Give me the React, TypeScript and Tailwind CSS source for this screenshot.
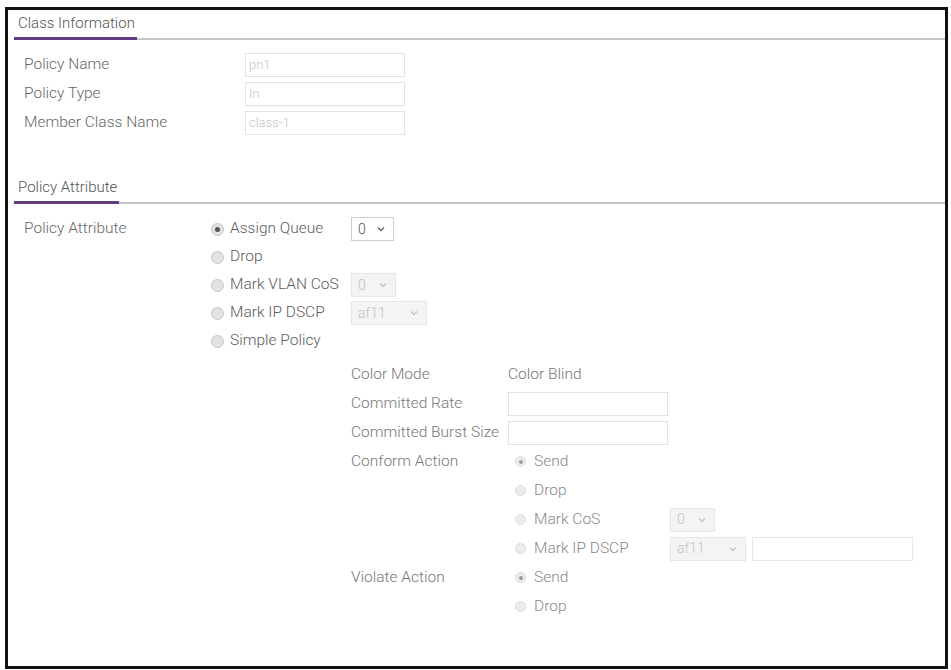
import React from 'react';

const Chevron: React.FC<{ muted?: boolean }> = ({ muted }) => (
  <svg width="8" height="6" viewBox="0 0 8 6" className="shrink-0">
    <path d="M1 1.5 L4 4.5 L7 1.5" fill="none" stroke={muted ? '#c4c4c4' : '#666'} strokeWidth="1.4" />
  </svg>
);

const Select: React.FC<{ value: string; width: string; disabled?: boolean }> = ({ value, width, disabled }) => (
  <div
    className={`flex h-[24px] items-center justify-between pl-[6px] pr-[8px] text-[14px] border ${width} ${
      disabled ? 'bg-[#f4f4f4] border-[#e6e6e6] text-[#c2c2c2]' : 'bg-white border-[#cfcfcf] text-[#555]'
    }`}
  >
    <span>{value}</span>
    <Chevron muted={disabled} />
  </div>
);

const TextBox: React.FC<{ value?: string; className?: string }> = ({ value, className = '' }) => (
  <div className={`flex h-[24px] w-[160px] items-center border border-[#e2e2e2] bg-white pl-[3px] text-[13px] text-[#c4c4c4] ${className}`}>
    {value}
  </div>
);

const Radio: React.FC<{ checked?: boolean; small?: boolean }> = ({ checked, small }) => (
  <span
    className={`flex shrink-0 items-center justify-center rounded-full border ${
      small ? 'h-[11px] w-[11px] border-[#dcdcdc] bg-[#ececec]' : 'h-[13px] w-[13px] border-[#c4c4c4] bg-[#e2e2e2]'
    }`}
  >
    {checked && <span className={`rounded-full ${small ? 'h-[4px] w-[4px] bg-[#9a9a9a]' : 'h-[5px] w-[5px] bg-[#555]'}`} />}
  </span>
);

const SectionHeader: React.FC<{ title: string }> = ({ title }) => (
  <div className="ml-[6px] flex h-[30px] items-end border-b-2 border-[#c6c6c6]">
    <div className="-mb-[2px] border-b-[3px] border-[#5f3d80] pb-[5px] pl-[4px] pr-[2px] text-[15px] leading-[18px] text-[#555]">
      {title}
    </div>
  </div>
);

const InfoRow: React.FC<{ label: string; value: string }> = ({ label, value }) => (
  <div className="flex h-[29px] items-center pl-[16px]">
    <div className="w-[221px] text-[#666]">{label}</div>
    <TextBox value={value} />
  </div>
);

const attributeOptions = [
  { label: 'Assign Queue', checked: true, select: <Select value="0" width="w-[43px]" /> },
  { label: 'Drop' },
  { label: 'Mark VLAN CoS', select: <Select value="0" width="w-[45px]" disabled /> },
  { label: 'Mark IP DSCP', select: <Select value="af11" width="w-[76px]" disabled /> },
  { label: 'Simple Policy' },
] as { label: string; checked?: boolean; select?: React.ReactNode }[];

// one line of the simple policy block: label column + value column
const PolicyRow: React.FC<{ label?: string; children?: React.ReactNode }> = ({ label, children }) => (
  <div className="flex h-[29px] items-center">
    <div className="w-[157px] whitespace-nowrap text-[#777]">{label}</div>
    <div className="flex items-center">{children}</div>
  </div>
);

const ActionOption: React.FC<{ label: string; checked?: boolean; extra?: React.ReactNode }> = ({ label, checked, extra }) => (
  <>
    <div className="flex w-[162px] items-center pl-[7px]">
      <Radio small checked={checked} />
      <span className="ml-[8px] text-[#888]">{label}</span>
    </div>
    {extra}
  </>
);

export default function App() {
  return (
    <div className="h-[670px] w-[951px] bg-white pl-[5px] pt-[7px] font-['Roboto',sans-serif] text-[15.5px] font-light">
      <div className="h-[662px] w-[943px] border-[3px] border-[#111]">
        <SectionHeader title="Class Information" />
        <div className="mt-[10px]">
          <InfoRow label="Policy Name" value="pn1" />
          <InfoRow label="Policy Type" value="In" />
          <InfoRow label="Member Class Name" value="class-1" />
        </div>

        <div className="mt-[37px]">
          <SectionHeader title="Policy Attribute" />
        </div>

        <div className="mt-[11px] flex pl-[16px]">
          <div className="flex h-[28px] w-[186px] items-center text-[#666]">Policy Attribute</div>
          <div>
            {attributeOptions.map((o) => (
              <div key={o.label} className="flex h-[28px] items-center">
                <div className="flex w-[141px] items-center pl-[1px]">
                  <Radio checked={o.checked} />
                  <span className="ml-[6px] whitespace-nowrap text-[#5c5c5c]">{o.label}</span>
                </div>
                {o.select}
              </div>
            ))}

            <div className="ml-[141px] mt-[5px]">
              <PolicyRow label="Color Mode">
                <span className="text-[#777]">Color Blind</span>
              </PolicyRow>
              <PolicyRow label="Committed Rate">
                <TextBox />
              </PolicyRow>
              <PolicyRow label="Committed Burst Size">
                <TextBox />
              </PolicyRow>
              <PolicyRow label="Conform Action">
                <ActionOption label="Send" checked />
              </PolicyRow>
              <PolicyRow>
                <ActionOption label="Drop" />
              </PolicyRow>
              <PolicyRow>
                <ActionOption label="Mark CoS" extra={<Select value="0" width="w-[45px]" disabled />} />
              </PolicyRow>
              <PolicyRow>
                <ActionOption
                  label="Mark IP DSCP"
                  extra={
                    <>
                      <Select value="af11" width="w-[76px]" disabled />
                      <TextBox className="ml-[6px] w-[161px] border-[#e8e8e8]" />
                    </>
                  }
                />
              </PolicyRow>
              <PolicyRow label="Violate Action">
                <ActionOption label="Send" checked />
              </PolicyRow>
              <PolicyRow>
                <ActionOption label="Drop" />
              </PolicyRow>
            </div>
          </div>
        </div>
      </div>
    </div>
  );
}
